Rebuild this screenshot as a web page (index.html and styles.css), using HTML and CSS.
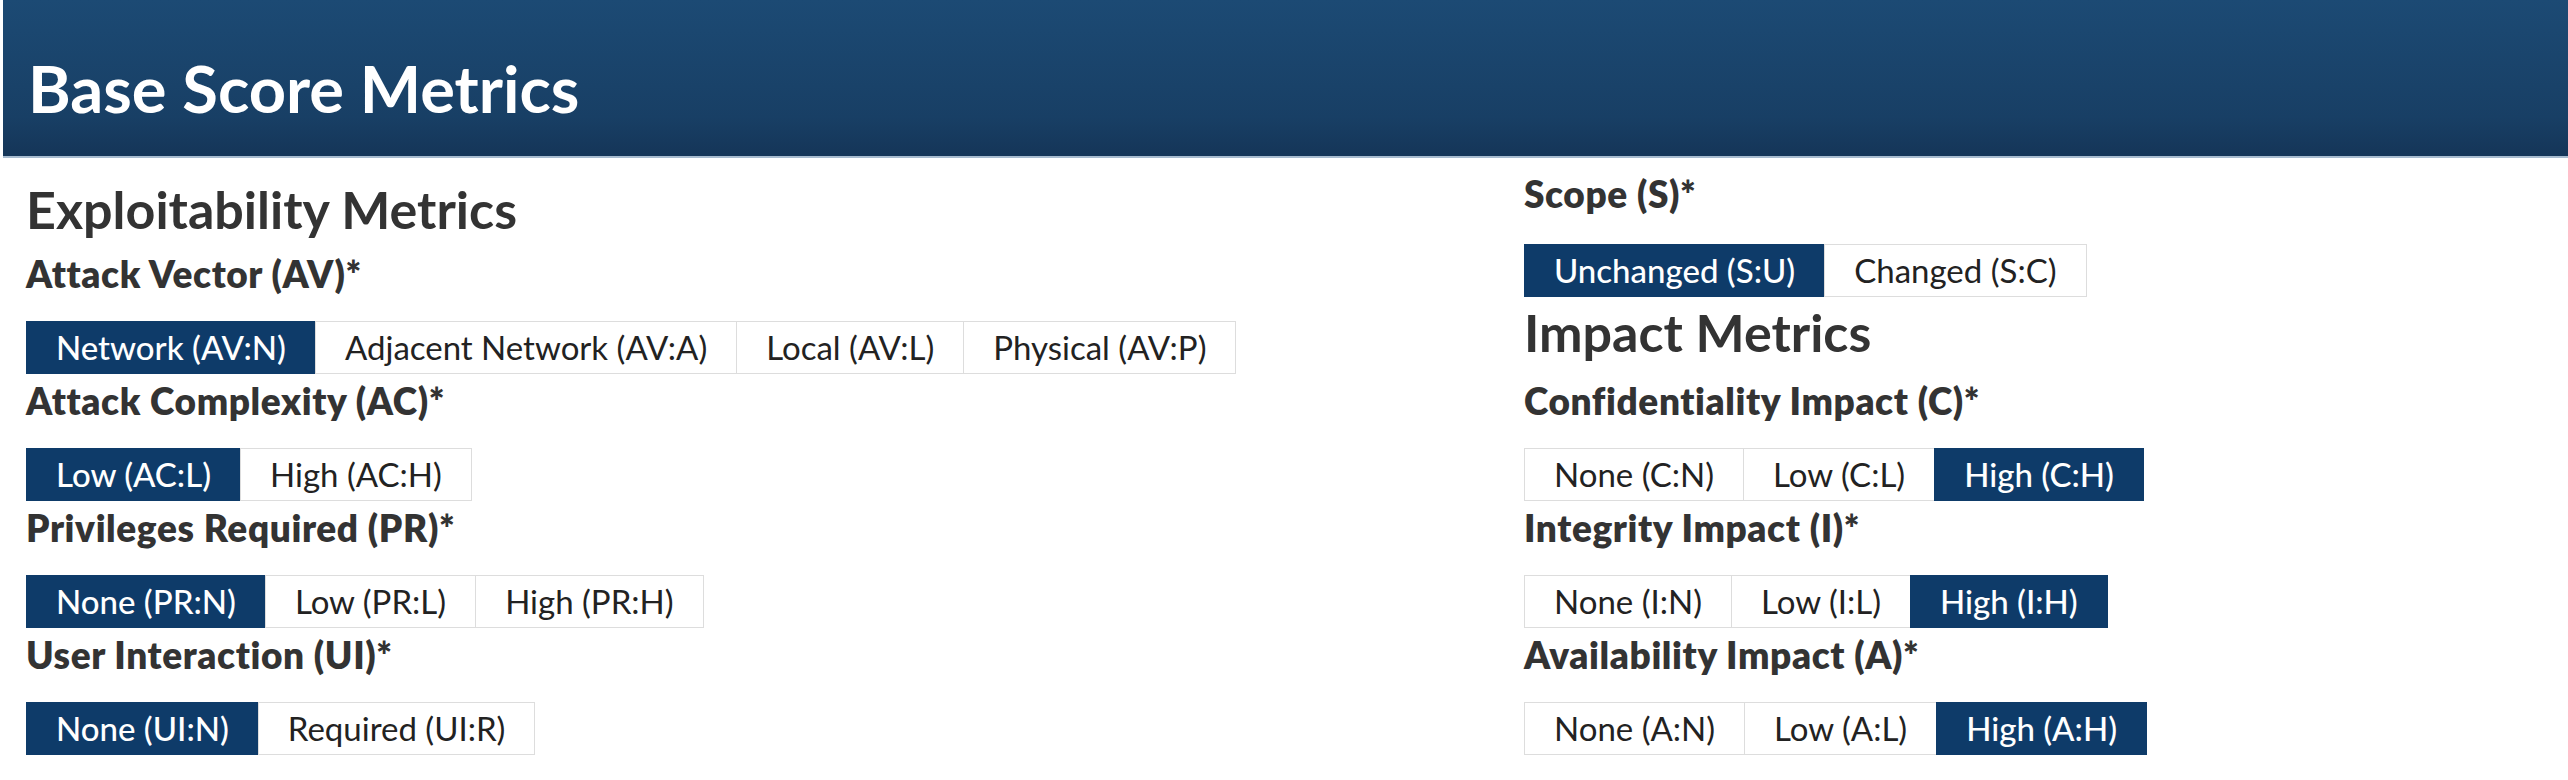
FILE: index.html
```html
<!DOCTYPE html>
<html lang="en">
<head>
<meta charset="utf-8">
<title>Base Score Metrics</title>
<link rel="stylesheet" href="styles.css">
</head>
<body>
<div class="header"><h1 class="title">Base Score Metrics</h1></div>
<div class="metrics">
  <div class="col col-left">
    <h2 class="section">Exploitability Metrics</h2>
    <div class="metric">
      <div class="label">Attack Vector (AV)*</div>
      <div class="btn-group">
        <span class="btn active">Network (AV:N)</span><span class="btn">Adjacent Network (AV:A)</span><span class="btn">Local (AV:L)</span><span class="btn">Physical (AV:P)</span>
      </div>
    </div>
    <div class="metric">
      <div class="label">Attack Complexity (AC)*</div>
      <div class="btn-group">
        <span class="btn active">Low (AC:L)</span><span class="btn">High (AC:H)</span>
      </div>
    </div>
    <div class="metric">
      <div class="label">Privileges Required (PR)*</div>
      <div class="btn-group">
        <span class="btn active">None (PR:N)</span><span class="btn">Low (PR:L)</span><span class="btn">High (PR:H)</span>
      </div>
    </div>
    <div class="metric">
      <div class="label">User Interaction (UI)*</div>
      <div class="btn-group">
        <span class="btn active">None (UI:N)</span><span class="btn">Required (UI:R)</span>
      </div>
    </div>
  </div>
  <div class="col col-right">
    <div class="metric metric-scope">
      <div class="label">Scope (S)*</div>
      <div class="btn-group">
        <span class="btn active">Unchanged (S:U)</span><span class="btn">Changed (S:C)</span>
      </div>
    </div>
    <h2 class="section section-impact">Impact Metrics</h2>
    <div class="metric">
      <div class="label">Confidentiality Impact (C)*</div>
      <div class="btn-group">
        <span class="btn">None (C:N)</span><span class="btn">Low (C:L)</span><span class="btn active">High (C:H)</span>
      </div>
    </div>
    <div class="metric">
      <div class="label">Integrity Impact (I)*</div>
      <div class="btn-group">
        <span class="btn">None (I:N)</span><span class="btn">Low (I:L)</span><span class="btn active">High (I:H)</span>
      </div>
    </div>
    <div class="metric">
      <div class="label">Availability Impact (A)*</div>
      <div class="btn-group">
        <span class="btn">None (A:N)</span><span class="btn">Low (A:L)</span><span class="btn active">High (A:H)</span>
      </div>
    </div>
  </div>
</div>
</body>
</html>
```
FILE: styles.css
```css
* { box-sizing: border-box; }
html, body {
  margin: 0;
  padding: 0;
  background: #ffffff;
  font-family: Lato, "Open Sans", sans-serif;
  color: #333333;
}
.header {
  margin-left: 3px;
  height: 158px;
  background: linear-gradient(to bottom, #1c4a74 0%, #183f65 75%, #153659 98%);
  border-bottom: 2px solid #a7bbcf;
  padding-left: 25px;
  display: flex;
  align-items: flex-start;
}
.title {
  margin: 0;
  padding-top: 51px;
  font-size: 65px;
  line-height: 74px;
  font-weight: 700;
  color: #ffffff;
}
.metrics {
  display: grid;
  grid-template-columns: 1498px 1fr;
}
.col {
  padding-left: 26px;
  display: flex;
  flex-direction: column;
  align-items: flex-start;
}
.section {
  margin: 0;
  font-size: 52px;
  line-height: 60px;
  font-weight: 700;
  color: #333333;
}
.col-left .section {
  margin-top: 21px;
  margin-bottom: 8px;
}
.section-impact {
  margin-top: 5px;
  margin-bottom: 12px;
}
.metric {
  display: flex;
  flex-direction: column;
  align-items: flex-start;
}
.label {
  font-size: 37px;
  font-weight: 800;
  letter-spacing: 0.6px;
  line-height: 44px;
  margin-top: 5px;
  margin-bottom: 25px;
  color: #333333;
}
.metric-scope .label {
  margin-top: 14px;
  margin-bottom: 28px;
}
.btn-group {
  display: flex;
}
.btn {
  display: block;
  height: 53px;
  line-height: 51px;
  padding: 0 29px;
  font-size: 33px;
  color: #222222;
  background: #ffffff;
  border: 1px solid #dddddd;
  white-space: nowrap;
}
.btn + .btn { margin-left: -1px; }
.btn.active {
  background: #0e3b69;
  border-color: #0e3b69;
  color: #ffffff;
  font-weight: 500;
}
```
